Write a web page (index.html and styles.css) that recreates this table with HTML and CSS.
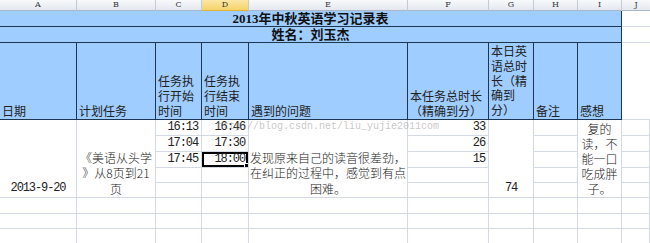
FILE: index.html
```html
<!DOCTYPE html>
<html lang="zh">
<head>
<meta charset="utf-8">
<link rel="stylesheet" href="styles.css">
</head>
<body>
<div class="sheet">
  <div class="hd">A</div>
  <div class="hd">B</div>
  <div class="hd">C</div>
  <div class="hd sel">D</div>
  <div class="hd">E</div>
  <div class="hd">F</div>
  <div class="hd">G</div>
  <div class="hd">H</div>
  <div class="hd">I</div>
  <div class="hd hd-j">J</div>

  <div class="title">2013年中秋英语学习记录表</div>
  <div class="jc"></div>
  <div class="title">姓名：刘玉杰</div>
  <div class="jc"></div>

  <div class="th">日期</div>
  <div class="th">计划任务</div>
  <div class="th">任务执行开始时间</div>
  <div class="th">任务执行结束时间</div>
  <div class="th">遇到的问题</div>
  <div class="th">本任务总时长（精确到分）</div>
  <div class="th th-tall">本日英语总时长（精确到分）</div>
  <div class="th">备注</div>
  <div class="th">感想</div>
  <div class="jc jc-open"></div>

  <!-- data row 1 -->
  <div class="c span5 num center bottom">2013-9-20</div>
  <div class="c span5 cjk center bottom">《美语从头学<br>》从8页到21<br>页</div>
  <div class="c num right">16:13</div>
  <div class="c num right">16:46</div>
  <div class="c span5 cjk center bottom">发现原来自己的读音很差劲，<br>在纠正的过程中，感觉到有点<br>困难。</div>
  <div class="c num right">33</div>
  <div class="c span5 num center bottom">74</div>
  <div class="c"></div>
  <div class="c span5 cjk center bottom tight">复的<br>读，不<br>能一口<br>吃成胖<br>子。</div>
  <div class="c"></div>
  <!-- data row 2 -->
  <div class="c num right">17:04</div>
  <div class="c num right">17:30</div>
  <div class="c num right">26</div>
  <div class="c"></div>
  <div class="c"></div>
  <!-- data row 3 -->
  <div class="c num right">17:45</div>
  <div class="c num right active">18:00</div>
  <div class="c num right">15</div>
  <div class="c"></div>
  <div class="c"></div>
  <!-- data row 4 -->
  <div class="c"></div>
  <div class="c"></div>
  <div class="c"></div>
  <div class="c"></div>
  <div class="c"></div>
  <!-- data row 5 -->
  <div class="c"></div>
  <div class="c"></div>
  <div class="c"></div>
  <div class="c"></div>
  <div class="c"></div>
  <!-- rows 6-8 -->
  <div class="c"></div><div class="c"></div><div class="c"></div><div class="c"></div><div class="c"></div><div class="c"></div><div class="c"></div><div class="c"></div><div class="c"></div><div class="c"></div>
  <div class="c"></div><div class="c"></div><div class="c"></div><div class="c"></div><div class="c"></div><div class="c"></div><div class="c"></div><div class="c"></div><div class="c"></div><div class="c"></div>
  <div class="c"></div><div class="c"></div><div class="c"></div><div class="c"></div><div class="c"></div><div class="c"></div><div class="c"></div><div class="c"></div><div class="c"></div><div class="c"></div>

  <div class="watermark">http://blog.csdn.net/liu_yujie2011com</div>
</div>
</body>
</html>
```

FILE: styles.css
```css
* { box-sizing: border-box; }
html, body { margin: 0; padding: 0; background: #fff; }
body {
  width: 650px;
  height: 243px;
  overflow: hidden;
  font-family: "Noto Sans CJK SC", sans-serif;
}
.sheet {
  position: relative;
  display: grid;
  grid-template-columns: 77px 79px 46px 47px 159px 81px 45px 44px 44px 28px;
  grid-template-rows: 11px 16px 16px 77px 16px 16px 16px 15px 15px 16px 15px 15px 14px;
  width: 650px;
  height: 243px;
  overflow: hidden;
}
.hd {
  background: linear-gradient(#f7f9fb, #e4e8ee);
  border-right: 1px solid #c2cad6;
  border-bottom: 1px solid #a9b8cc;
  font-family: "DejaVu Serif", serif;
  font-size: 8px;
  line-height: 10px;
  color: #333;
  text-align: center;
}
.hd.sel {
  background: linear-gradient(#fbe7a3, #f6d36a);
  border-bottom-color: #e0b43c;
}
.hd-j { border-right: none; }
.title {
  grid-column: 1 / span 9;
  background: #9fcdff;
  border-right: 1px solid #1e3656;
  border-bottom: 1px solid #1e3656;
  text-align: center;
  font-family: "Liberation Serif", "Noto Sans CJK SC", serif;
  font-weight: 700;
  font-size: 13px;
  line-height: 15px;
  color: #111;
}
.jc {
  border-bottom: 1px solid #d4dae4;
}
.th {
  background: #9fcdff;
  border-right: 1px solid #1e3656;
  border-bottom: 1px solid #1e3656;
  display: flex;
  align-items: flex-end;
  padding: 0 2px 1px 2px;
  font-family: "Noto Sans CJK SC", sans-serif;
  font-size: 12px;
  line-height: 15px;
  color: #222;
  overflow: hidden;
}
.th-tall { line-height: 14.8px; padding-bottom: 1px; }
.c {
  border-right: 1px solid #d4dae4;
  border-bottom: 1px solid #d4dae4;
  font-size: 12px;
  line-height: 15px;
  color: #222;
  padding: 0 2px;
  overflow: hidden;
  white-space: nowrap;
}
.span5 { grid-row: span 5; }
.num {
  font-family: "Liberation Mono", monospace;
  font-size: 12px;
  letter-spacing: -1.1px;
  line-height: 15px;
}
.cjk {
  font-family: "Noto Sans CJK SC", sans-serif;
  font-weight: 300;
  font-size: 12px;
  line-height: 15.5px;
}
.tight { line-height: 15px; }
.right { text-align: right; padding-right: 3px; }
.center { text-align: center; }
.bottom {
  display: flex;
  flex-direction: column;
  justify-content: flex-end;
  padding-bottom: 1px;
}
.bottom.center { align-items: center; }
.active {
  position: relative;
  box-shadow: inset 0 0 0 2px #000;
}
.active::after {
  content: "";
  position: absolute;
  right: -3px;
  bottom: -3px;
  width: 5px;
  height: 5px;
  background: #000;
  border: 1px solid #fff;
}
.watermark {
  position: absolute;
  left: 217px;
  top: 121px;
  font-family: "Liberation Mono", monospace;
  font-size: 10px;
  line-height: 12px;
  color: rgba(150, 150, 150, 0.55);
  pointer-events: none;
  white-space: nowrap;
}
```
